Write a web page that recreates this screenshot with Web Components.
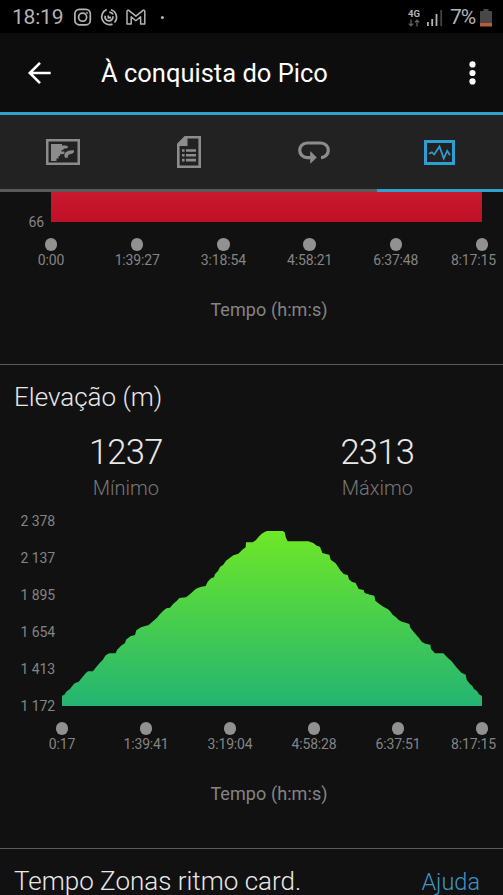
<!DOCTYPE html>
<html lang="pt">
<head>
<meta charset="utf-8">
<meta name="viewport" content="width=device-width">
<title>À conquista do Pico</title>
<style>
  body {
    margin: 0;
    background: #111;
    overflow: hidden;
    font-family: Roboto, "Liberation Sans", sans-serif;
  }
</style>
</head>
<body>
<activity-page>
  <status-bar slot="top" time="18:19" battery="7%"></status-bar>
  <app-header slot="top">À conquista do Pico</app-header>
  <tab-bar slot="top"></tab-bar>

  <time-chart style="--left: 51px; --plot-height: 30px;" times="0:00 1:39:27 3:18:54 4:58:21 6:37:48 8:17:15" levels="66">
    <svg viewBox="0 0 431 30" preserveAspectRatio="none">
      <defs>
        <linearGradient id="hr" x1="0" y1="0" x2="0" y2="1">
          <stop offset="0" stop-color="#c9192f"/>
          <stop offset="1" stop-color="#c01026"/>
        </linearGradient>
      </defs>
      <rect width="431" height="30" fill="url(#hr)"/>
    </svg>
  </time-chart>

  <section-title style="--height: 66px;">Elevação (m)</section-title>
  <stat-row>
    <stat-value value="1237">Mínimo</stat-value>
    <stat-value value="2313">Máximo</stat-value>
  </stat-row>
  <time-chart style="--left: 62px; --plot-height: 185px; --pad: 11px;" times="0:17 1:39:41 3:19:04 4:58:28 6:37:51 8:17:15" levels="2 378|2 137|1 895|1 654|1 413|1 172">
    <svg viewBox="186 33 1260 555" preserveAspectRatio="none">
      <defs>
        <linearGradient id="el" gradientUnits="userSpaceOnUse" x1="0" y1="63" x2="0" y2="588">
          <stop offset="0" stop-color="#6ee827"/>
          <stop offset="1" stop-color="#23b472"/>
        </linearGradient>
      </defs>
      <path fill="url(#el)" d="M186 588V557L193 554L201 543L210 537L216 529L224 520L236 515L247 502L257 490L264 484H279L287 473L299 459L308 450L317 436L328 430H347L351 420L363 407L375 399L378 389L391 379L405 375L409 361L423 352L446 345L459 334L471 323L478 314L489 303L499 295L510 293L520 281L530 273L538 264L558 262L568 254L578 245L588 236L601 231L617 228L623 215L633 205L642 202L645 192L654 183L660 171L670 164L678 152L689 144L700 136L715 131L727 119L737 112L738 97H758L768 90L776 80L785 71L795 65L801 63H848L854 67L858 84L863 94H925L940 99L950 107L960 110L967 129L978 132L988 134L992 149L1007 160L1021 181L1031 192L1043 195L1047 208L1055 215L1067 219L1076 237L1091 240L1094 249L1110 254L1123 257L1126 272L1138 282L1150 290L1163 297L1170 303L1178 314L1188 322L1196 330L1206 335L1217 338L1228 342L1231 353L1243 368L1257 384L1266 396L1276 401L1291 404L1293 417L1305 430H1330L1343 443L1355 454L1369 472L1384 488L1397 494L1400 509L1410 522L1417 528L1422 537L1431 543L1437 553L1446 558V588Z"/>
    </svg>
  </time-chart>

  <section-title style="--height: 66px;">Tempo Zonas ritmo card.<span slot="link">Ajuda</span></section-title>
</activity-page>

<template id="activity-page">
  <style>
    :host {
      display: flex;
      flex-direction: column;
      height: 895px;
      overflow: hidden;
      color: #e8e8e8;
      background: #111;
    }
    header, main { flex: none; }
  </style>
  <header><slot name="top"></slot></header>
  <main><slot></slot></main>
</template>

<template id="status-bar">
  <style>
    :host {
      display: flex;
      align-items: center;
      box-sizing: border-box;
      height: 33px;
      padding: 2px 11px 0 12px;
      background: #000;
      color: #b4b4b4;
      font-size: 21px;
      line-height: 31px;
    }
    svg { display: block; flex: none; }
    .time { width: 62px; letter-spacing: -0.2px; }
    .battery { margin-left: 7px; width: 30px; letter-spacing: -1px; }
    .net {
      display: flex;
      flex-direction: column;
      align-items: center;
      margin-left: auto;
      font-size: 9.5px;
      font-weight: 700;
      line-height: 10px;
    }
  </style>
  <span class="time"></span>
  <svg width="100" height="20" viewBox="0 0 100 20" fill="none" stroke="#b4b4b4" stroke-width="1.7">
    <rect x=".9" y="1.4" width="15.4" height="15.4" rx="4.4"/>
    <circle cx="8.6" cy="9.2" r="4"/>
    <circle cx="13" cy="4.9" r=".7" fill="#b4b4b4" stroke-width=".6"/>
    <path d="M32.7 1.5A7.8 7.8 0 1 0 38.5 16.1M37 1.8A7.8 7.8 0 0 1 40.5 14.5"/>
    <path d="M31.3 7.7A3.9 3.9 0 1 0 38.8 8.2M35.3 4.4Q38 4 39 6.5M34.2 7.5L34.5 9.8L37 9.5" stroke-width="1.8"/>
    <path d="M53 16V3.6Q53 1.8 54.8 2.3L61.9 8.2L69 2.3Q70.8 1.8 70.8 3.6V16H66.6V8.8L61.9 12.8L57.2 8.8V16Z" stroke-width="1.5" stroke-linejoin="round"/>
    <circle cx="88.4" cy="9.4" r="1.5" fill="#b4b4b4" stroke="none"/>
  </svg>
  <span class="net">
    <span>4G</span>
    <svg width="12" height="8" viewBox="0 0 12 8" fill="none" stroke="#606060" stroke-width="1.3">
      <path d="M3 .5V6.8M.8 4.6L3 6.9L5.2 4.6M9 7.5V1.2M6.8 3.4L9 1.1L11.2 3.4"/>
    </svg>
  </span>
  <svg width="16" height="17" viewBox="0 0 16 17" style="margin-left: 7px">
    <path d="M0 13H1.8V17H0ZM4.3 10H6.1V17H4.3ZM8.6 5H10.4V17H8.6Z" fill="#b4b4b4"/>
    <path d="M13.3 1H15.1V17H13.3Z" fill="#444"/>
  </svg>
  <span class="battery"></span>
  <svg width="12" height="18" viewBox="0 0 12 18">
    <path d="M3.5 0H8.5V2H11Q12 2 12 3V14H0V3Q0 2 1 2H3.5Z" fill="#484848"/>
    <path d="M0 14H12V17.5H0Z" fill="#b85c40"/>
  </svg>
</template>

<template id="app-header">
  <style>
    :host {
      display: flex;
      align-items: center;
      box-sizing: border-box;
      height: 82px;
      padding: 0 27.5px 0 27px;
      background: #0d0d0d;
      border-bottom: 3px solid #339fd0;
      color: #fff;
    }
    svg { flex: none; }
    h1 {
      flex: 1;
      margin: 1px 0 0 49px;
      font-size: 25.5px;
      font-weight: 400;
      line-height: 32px;
      white-space: nowrap;
    }
  </style>
  <svg width="25" height="24" viewBox="0 0 25 24" fill="none" stroke="#fff" stroke-width="2.6">
    <path d="M23.7 12H3M13 1.8L2.8 12L13 22.2"/>
  </svg>
  <h1><slot></slot></h1>
  <svg width="7" height="24" viewBox="0 0 7 24" fill="#fff">
    <circle cx="3.5" cy="3.4" r="3.1"/>
    <circle cx="3.5" cy="12" r="3.1"/>
    <circle cx="3.5" cy="20.4" r="3.1"/>
  </svg>
</template>

<template id="tab-bar">
  <style>
    :host {
      display: grid;
      grid-template-columns: repeat(4, 1fr);
      height: 77px;
      background: #222;
      color: #8c8c8c;
    }
    div {
      display: flex;
      align-items: center;
      justify-content: center;
      border-bottom: 3px solid #5a5a5a;
    }
    .active {
      padding-right: 2px;
      color: #2f9fd3;
      border-color: #339fd0;
    }
  </style>
  <div>
    <svg width="34" height="26" viewBox="0 0 34 26" fill="currentColor">
      <path d="M1.2 1.2H32.8V24.8H1.2Z" fill="none" stroke="currentColor" stroke-width="2.6"/>
      <path d="M5 5H16V6.5H19.5Q22 6.5 22 8T19.5 9.5H17.5V11H15.5V12.5H18Q19 12.7 18.5 14T15 15.2H14V17H12.5V19.5H10.5V22H5Z"/>
      <path d="M28 11.3Q23 10.7 20 13Q17.3 15.5 19 18.8H21.8Q21.5 16.5 23 15.5L26.5 14.5Q28.5 13.5 28 11.3Z"/>
    </svg>
  </div>
  <div>
    <svg width="24" height="32" viewBox="0 0 24 32" fill="currentColor">
      <path d="M8.2 1.3H22.7V30.7H1.3V8.2Z" fill="none" stroke="currentColor" stroke-width="2.6"/>
      <path d="M8 1H10.5V10H1V8Z"/>
      <path d="M5 13.2H7.6V15.8H5ZM9 13.2H19V15.8H9ZM5 18H7.6V20.6H5ZM9 18H19V20.6H9ZM5 22.8H7.6V25.4H5ZM9 22.8H19V25.4H9Z"/>
    </svg>
  </div>
  <div>
    <svg width="32" height="24" viewBox="0 0 32 24">
      <path d="M13 17.6H9A7.3 7.3 0 0 1 9 3H23A7.3 7.3 0 0 1 23 17.6" fill="none" stroke="currentColor" stroke-width="3.2"/>
      <path d="M12.2 11L18.8 17.4L12.2 23.8Z" fill="currentColor"/>
    </svg>
  </div>
  <div class="active">
    <svg width="31" height="25" viewBox="0 0 31 25" fill="none" stroke="currentColor">
      <path d="M1.5 1.5H29.5V23.5H1.5Z" stroke-width="3"/>
      <path d="M5 13.8L7.8 12.2L10.2 14.5L15.5 6.5L19.7 18.5L23.2 10.8L26 15.2" stroke-width="1.7"/>
    </svg>
  </div>
</template>

<template id="time-chart">
  <style>
    :host {
      display: block;
      border-bottom: 1px solid #5c5c5c;
      color: #848484;
      font-size: 14px;
      line-height: 16px;
    }
    .plot {
      display: flex;
      padding: var(--pad, 0) 21px 0 0;
      height: var(--plot-height);
    }
    .levels {
      display: flex;
      flex-direction: column;
      justify-content: space-between;
      box-sizing: border-box;
      flex: none;
      width: var(--left);
      padding-right: 7px;
      margin: -8px 0 -8px;
      text-align: right;
      letter-spacing: -0.1px;
    }
    .levels span:only-child { margin-top: auto; }
    ::slotted(svg) {
      display: block;
      flex: 1;
      min-width: 0;
      height: 100%;
    }
    .ticks {
      display: flex;
      justify-content: space-between;
      margin: 16px 21px 0 var(--left);
    }
    .ticks div {
      display: flex;
      flex-direction: column;
      align-items: center;
      width: 0;
      white-space: nowrap;
      letter-spacing: -0.15px;
    }
    .ticks div:last-child span { margin-left: -17px; }
    i {
      width: 12.5px;
      height: 12.5px;
      margin-bottom: 1.5px;
      border-radius: 50%;
      background: #919191;
    }
    p {
      margin: 30px 0 43px;
      padding-left: 35px;
      font-size: 18px;
      line-height: 23px;
      letter-spacing: 0.08px;
      text-align: center;
    }
  </style>
  <div class="plot">
    <div class="levels"></div>
    <slot></slot>
  </div>
  <div class="ticks"></div>
  <p>Tempo (h:m:s)</p>
</template>

<template id="section-title">
  <style>
    :host {
      display: flex;
      align-items: baseline;
      justify-content: space-between;
      box-sizing: border-box;
      height: var(--height);
      padding: 16px 23px 0 14px;
      font-size: 26px;
      font-weight: 300;
      line-height: 32px;
      white-space: nowrap;
    }
    .link { color: #3d94c4; font-size: 23.5px; }
  </style>
  <span><slot></slot></span>
  <span class="link"><slot name="link"></slot></span>
</template>

<template id="stat-row">
  <style>
    :host {
      display: grid;
      grid-template-columns: 1fr 1fr;
      height: 79px;
    }
  </style>
  <slot></slot>
</template>

<template id="stat-value">
  <style>
    :host {
      display: block;
      text-align: center;
      font-weight: 300;
    }
    b {
      display: block;
      padding-top: 1px;
      font-size: 34.5px;
      font-weight: 300;
      line-height: 41px;
      letter-spacing: -0.7px;
    }
    span {
      display: block;
      color: #777;
      font-size: 20px;
      line-height: 30px;
    }
  </style>
  <b></b>
  <span><slot></slot></span>
</template>

<script>
  (function() {
    class BaseElement extends HTMLElement {
      constructor() {
        super();
        let shadowRoot = this.attachShadow({mode: 'open'});
        let tmpl = document.getElementById(this.localName);
        shadowRoot.appendChild(document.importNode(tmpl.content, true));
      }
    }

    class StatusBar extends BaseElement {
      connectedCallback() {
        this.shadowRoot.querySelector('.time').textContent = this.getAttribute('time');
        this.shadowRoot.querySelector('.battery').textContent = this.getAttribute('battery');
      }
    }

    class StatValue extends BaseElement {
      connectedCallback() {
        this.shadowRoot.querySelector('b').textContent = this.getAttribute('value');
      }
    }

    class TimeChart extends BaseElement {
      connectedCallback() {
        let levels = this.getAttribute('levels').split('|');
        let times = this.getAttribute('times').split(' ');
        this.shadowRoot.querySelector('.levels').innerHTML =
          levels.map(l => `<span>${l}</span>`).join('');
        this.shadowRoot.querySelector('.ticks').innerHTML =
          times.map(t => `<div><i></i><span>${t}</span></div>`).join('');
      }
    }

    customElements.define('activity-page', class extends BaseElement {});
    customElements.define('status-bar', StatusBar);
    customElements.define('app-header', class extends BaseElement {});
    customElements.define('tab-bar', class extends BaseElement {});
    customElements.define('time-chart', TimeChart);
    customElements.define('section-title', class extends BaseElement {});
    customElements.define('stat-row', class extends BaseElement {});
    customElements.define('stat-value', StatValue);
  })();
</script>
</body>
</html>
